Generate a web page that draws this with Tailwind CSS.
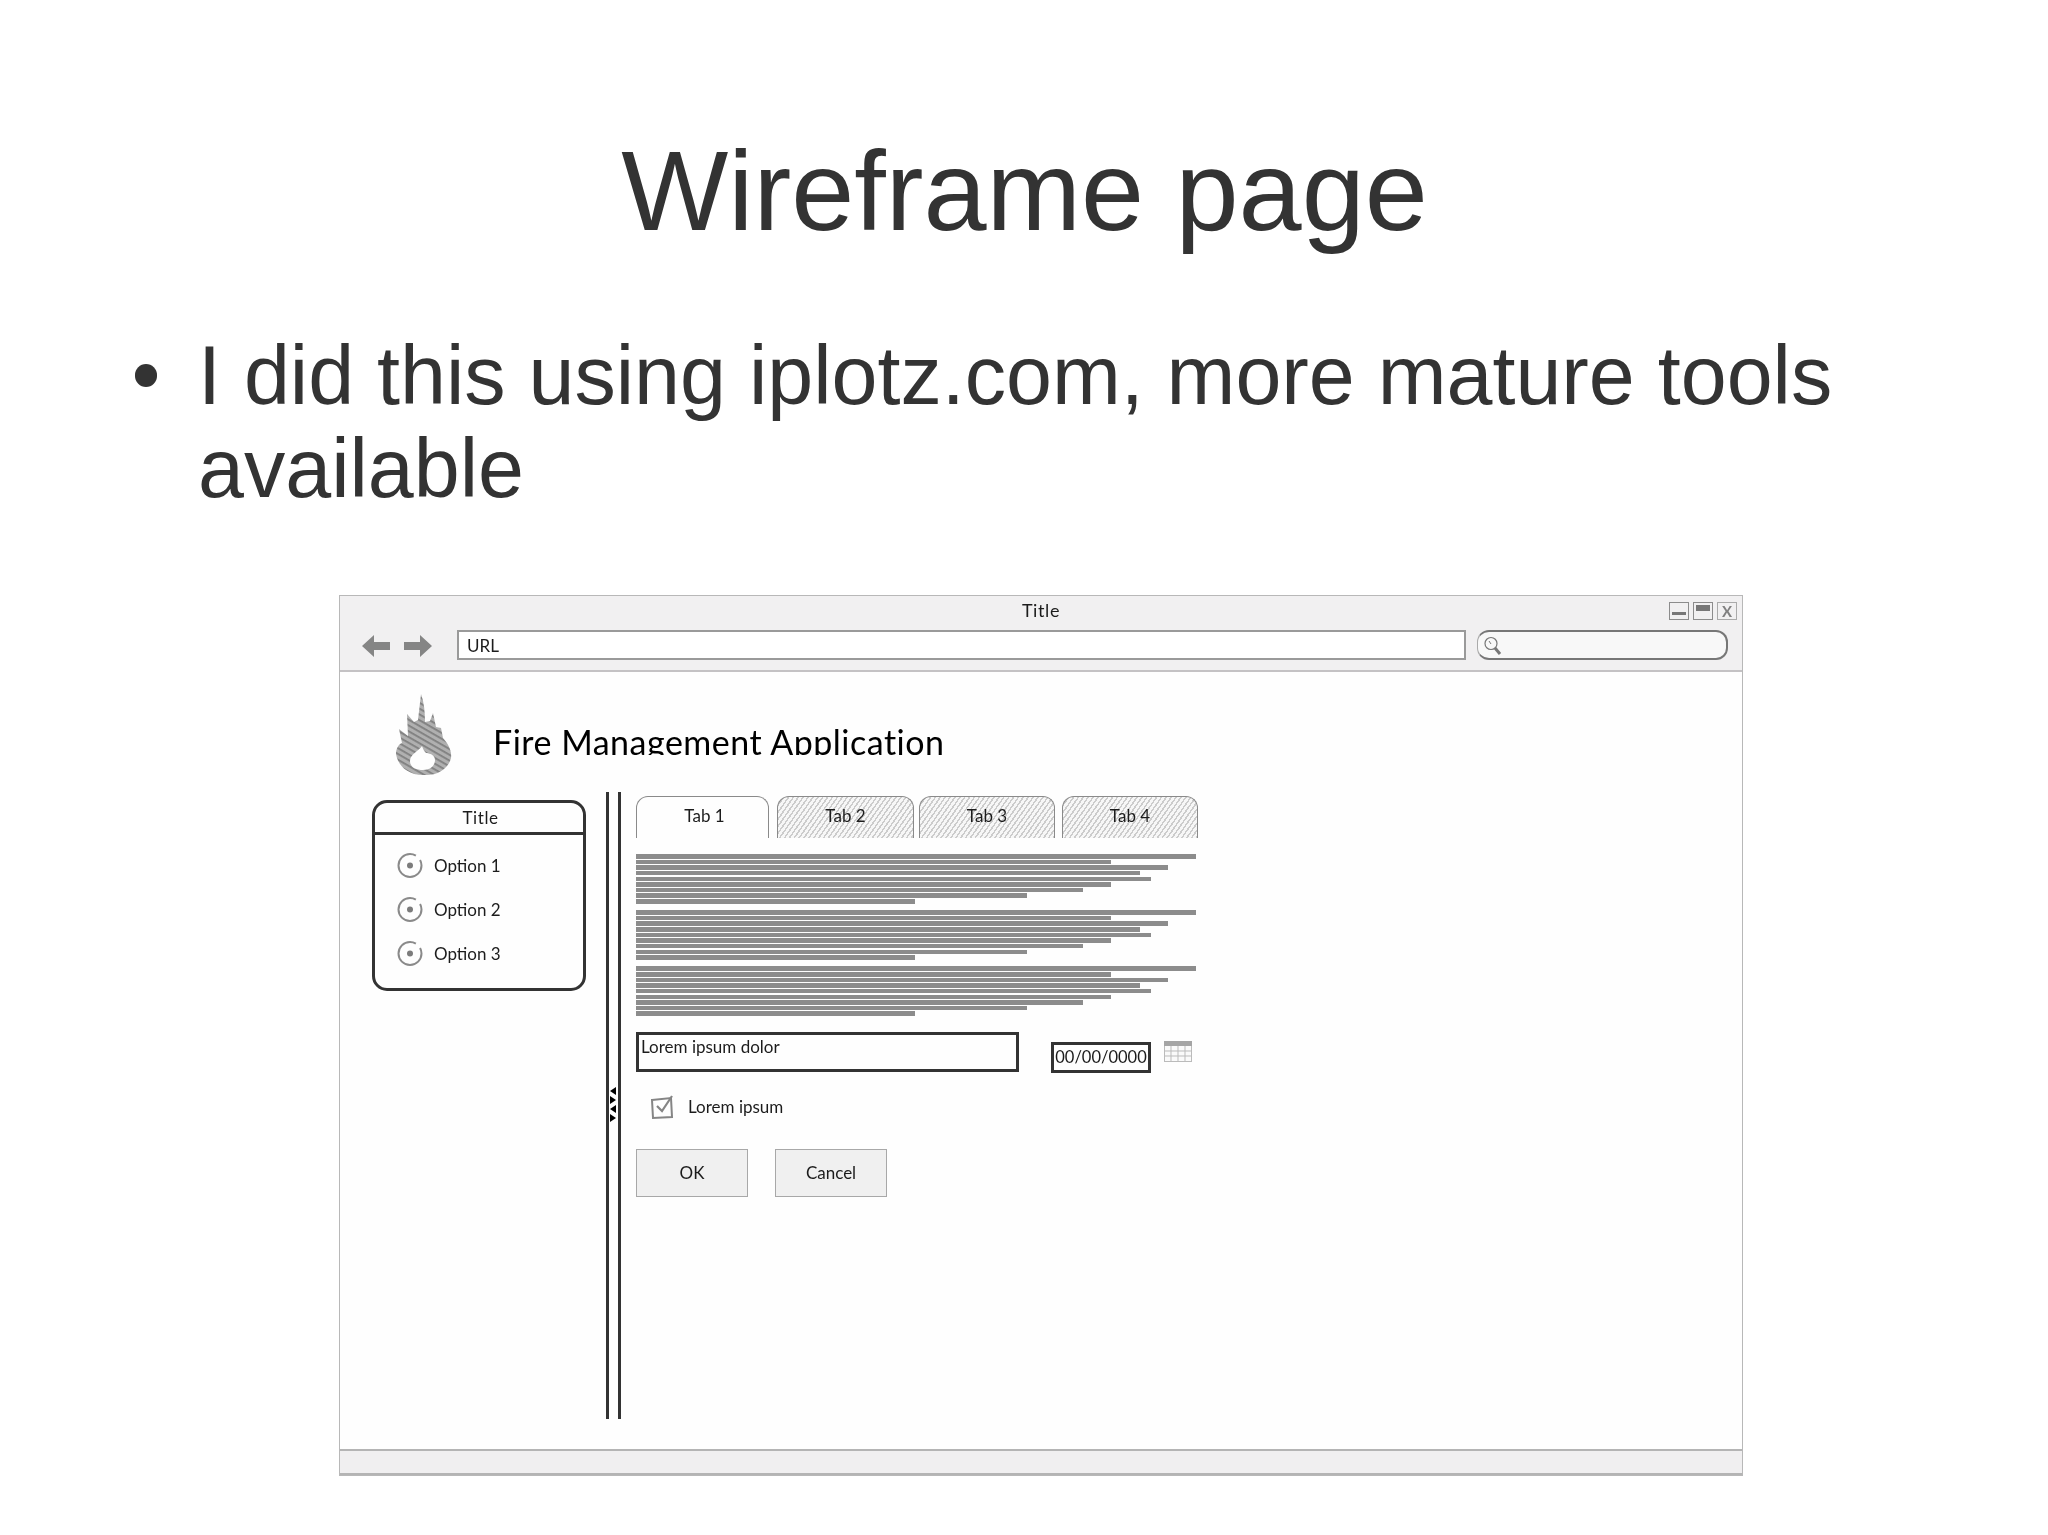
<!DOCTYPE html>
<html lang="en">
<head>
    <meta charset="UTF-8">
    <title>Wireframe page</title>
    <script src="https://cdn.jsdelivr.net/npm/@tailwindcss/browser@4"></script>
</head>
<body class="bg-white min-h-screen text-[#333333] font-['Liberation_Sans',Arial,sans-serif]">
    <div class="w-[2048px] h-[1535px] overflow-hidden">
        <!-- slide heading -->
        <h1 class="pt-[127px] h-[254px] text-center text-[113.4px] leading-[127px] pl-[1px]">Wireframe page</h1>

        <!-- bullet -->
        <div class="flex pl-[135px] mt-[78px] h-[188px]">
            <span class="w-[22px] h-[23px] rounded-full bg-[#333333] mt-[32px] shrink-0"></span>
            <p class="ml-[41px] -mt-[3px] w-[1700px] text-[82.6px] leading-[93px]">I did this using iplotz.com, more mature tools available</p>
        </div>

        <!-- wireframe window -->
        <div class="ml-[339px] mt-[75px] w-[1404px] h-[881px] flex flex-col border border-[#b8b8b8] bg-[#fefefe] font-['Lato',sans-serif] text-[#1c1c1c] blur-[0.5px]">
            <div class="h-[76px] bg-[#f1f0f1] border-b-2 border-[#c4c2c4] shrink-0 flex flex-col">
                <div class="h-[34px] relative flex justify-center pt-[3px]">
                    <span class="text-[18px] leading-[23px] tracking-[0.6px]">Title</span>
                    <div class="absolute right-[5px] top-[6px] flex gap-[4px]">
                        <div class="w-[20px] h-[18px] border border-[#8c8c8c] flex items-end justify-center pb-[4px]"><div class="w-[14px] h-[3px] bg-[#777777]"></div></div>
                        <div class="w-[20px] h-[18px] border border-[#8c8c8c] flex justify-center pt-[2px]"><div class="w-[14px] h-[6px] bg-[#777777]"></div></div>
                        <div class="w-[20px] h-[18px] border border-[#aaaaaa] text-[15px] leading-[16px] text-center font-bold text-[#808080]">X</div>
                    </div>
                </div>
                <div class="flex items-center pl-[22px] h-[30px]">
                    <svg class="w-[28px] h-[22px] mt-[2px]" viewBox="0 0 28 22"><path d="M0 11 L12 0 V7 H28 V15 H12 V22Z" fill="#858585"/></svg>
                    <svg class="w-[28px] h-[22px] ml-[14px] mt-[2px]" viewBox="0 0 28 22"><path d="M28 11 L16 0 V7 H0 V15 H16 V22Z" fill="#858585"/></svg>
                    <div class="ml-[25px] w-[1009px] h-[30px] bg-white border-2 border-[#9a9a9a] pl-[8px] text-[17px] leading-[28px]">URL</div>
                    <div class="ml-[11px] w-[251px] h-[30px] rounded-[12px] border-2 border-[#777777] border-l border-l-[#aaaaaa] relative bg-[#f8f8f8]">
                        <svg class="absolute left-[5px] top-[4px] w-[20px] h-[20px]" viewBox="0 0 20 20" fill="none" stroke="#777777"><circle cx="8" cy="7.5" r="6" stroke-width="1.2"/><path d="M12 12 L17 18" stroke-width="3"/><path d="M6 5 L8 8" stroke-width="1"/></svg>
                    </div>
                </div>
            </div>

            <div class="flex-1 flex flex-col relative">
                <!-- app header -->
                <div class="flex h-[119px] pl-[56px] shrink-0">
                    <svg class="w-[56px] h-[82px] mt-[22px]" viewBox="0 0 56 82">
                        <defs><pattern id="fireHatch" width="5" height="5" patternUnits="userSpaceOnUse" patternTransform="rotate(30)"><rect width="5" height="5" fill="#b0b0b0"/><rect width="5" height="1.8" fill="#808080"/></pattern></defs>
                        <path fill-rule="evenodd" fill="url(#fireHatch)" d="M25 0 C28 8 29 18 29 28 L34 27 L37 19 L40 33 L45 34 L47 44 C52 50 56 56 55 64 C52 76 40 82 27 81 C12 81 2 72 0 60 C0 54 3 50 6 49 L3 35 L12 42 L11 20 L18 28 L22 26 Z M26 52 C24 56 14 60 14 67 C14 74 21 76 27 76 C34 76 39 72 39 66 C39 60 32 59 30 59 C28 57 27 55 26 52 Z"/>
                    </svg>
                    <div class="ml-[41px] mt-[47px] h-[36px] overflow-hidden text-[34px] leading-[46px] tracking-[0.5px] text-black whitespace-nowrap">Fire Management Application</div>
                </div>

                <div class="flex">
                    <!-- left panel -->
                    <div class="ml-[32px] mt-[9px] w-[214px] h-[191px] rounded-[15px] border-[3px] border-[#333333] shrink-0">
                        <div class="h-[32px] border-b-[3px] border-[#333333] text-center text-[17px] leading-[28px] pt-[1px] pl-[3px] tracking-[0.6px]">Title</div>
                        <div class="flex flex-col pl-[22px] pt-[17px] gap-[17px]">
                            <div class="flex items-center h-[27px]">
                                <svg class="w-[26px] h-[27px]" viewBox="0 0 26 27" fill="none"><circle cx="13" cy="13.5" r="11.5" stroke="#8a8a8a" stroke-width="2" stroke-dasharray="60 6"/><circle cx="13" cy="13.5" r="3" fill="#7c7c7c"/></svg>
                                <span class="ml-[11px] text-[17px]">Option 1</span>
                            </div>
                            <div class="flex items-center h-[27px]">
                                <svg class="w-[26px] h-[27px]" viewBox="0 0 26 27" fill="none"><circle cx="13" cy="13.5" r="11.5" stroke="#8a8a8a" stroke-width="2" stroke-dasharray="60 6"/><circle cx="13" cy="13.5" r="3" fill="#7c7c7c"/></svg>
                                <span class="ml-[11px] text-[17px]">Option 2</span>
                            </div>
                            <div class="flex items-center h-[27px]">
                                <svg class="w-[26px] h-[27px]" viewBox="0 0 26 27" fill="none"><circle cx="13" cy="13.5" r="11.5" stroke="#8a8a8a" stroke-width="2" stroke-dasharray="60 6"/><circle cx="13" cy="13.5" r="3" fill="#7c7c7c"/></svg>
                                <span class="ml-[11px] text-[17px]">Option 3</span>
                            </div>
                        </div>
                    </div>

                    <!-- splitter -->
                    <div class="ml-[20px] mt-[1px] w-[15px] h-[627px] border-x-[3px] border-[#333333] relative shrink-0">
                        <div class="absolute left-[1px] top-[295px] flex flex-col gap-[1px]">
                            <div class="w-0 h-0 border-y-[4px] border-y-transparent border-r-[6px] border-r-black"></div>
                            <div class="w-0 h-0 border-y-[4px] border-y-transparent border-l-[6px] border-l-black"></div>
                            <div class="w-0 h-0 border-y-[4px] border-y-transparent border-r-[6px] border-r-black"></div>
                            <div class="w-0 h-0 border-y-[4px] border-y-transparent border-l-[6px] border-l-black"></div>
                        </div>
                    </div>

                    <!-- tabbed content -->
                    <div class="ml-[15px] w-[562px] shrink-0 pt-[5px]">
                        <div class="flex h-[42px] text-[17px]">
                            <div class="w-[133px] rounded-t-[12px] border border-b-0 border-[#8a8a8a] text-center leading-[38px] pl-[4px]">Tab 1</div>
                            <div class="ml-[8px] w-[137px] rounded-t-[12px] border border-b-0 border-[#8a8a8a] text-center leading-[38px] bg-[repeating-linear-gradient(125deg,#cccccc_0,#cccccc_1.5px,#f7f7f7_1.5px,#f7f7f7_4px)]">Tab 2</div>
                            <div class="ml-[5px] w-[136px] rounded-t-[12px] border border-b-0 border-[#8a8a8a] text-center leading-[38px] bg-[repeating-linear-gradient(125deg,#cccccc_0,#cccccc_1.5px,#f7f7f7_1.5px,#f7f7f7_4px)]">Tab 3</div>
                            <div class="ml-[7px] w-[136px] rounded-t-[12px] border border-b-0 border-[#8a8a8a] text-center leading-[38px] bg-[repeating-linear-gradient(125deg,#cccccc_0,#cccccc_1.5px,#f7f7f7_1.5px,#f7f7f7_4px)]">Tab 4</div>
                        </div>

                        <div class="mt-[16px] flex flex-col gap-[6.7px]">
                            <div class="flex flex-col gap-[1.13px]">
                                <div class="h-[4.5px] w-[560px] bg-[#8c8c8c]"></div>
                                <div class="h-[4.5px] w-[475px] bg-[#8c8c8c]"></div>
                                <div class="h-[4.5px] w-[532px] bg-[#8c8c8c]"></div>
                                <div class="h-[4.5px] w-[504px] bg-[#8c8c8c]"></div>
                                <div class="h-[4.5px] w-[515px] bg-[#8c8c8c]"></div>
                                <div class="h-[4.5px] w-[475px] bg-[#8c8c8c]"></div>
                                <div class="h-[4.5px] w-[447px] bg-[#8c8c8c]"></div>
                                <div class="h-[4.5px] w-[391px] bg-[#8c8c8c]"></div>
                                <div class="h-[4.5px] w-[279px] bg-[#8c8c8c]"></div>
                            </div>
                            <div class="flex flex-col gap-[1.13px]">
                                <div class="h-[4.5px] w-[560px] bg-[#8c8c8c]"></div>
                                <div class="h-[4.5px] w-[475px] bg-[#8c8c8c]"></div>
                                <div class="h-[4.5px] w-[532px] bg-[#8c8c8c]"></div>
                                <div class="h-[4.5px] w-[504px] bg-[#8c8c8c]"></div>
                                <div class="h-[4.5px] w-[515px] bg-[#8c8c8c]"></div>
                                <div class="h-[4.5px] w-[475px] bg-[#8c8c8c]"></div>
                                <div class="h-[4.5px] w-[447px] bg-[#8c8c8c]"></div>
                                <div class="h-[4.5px] w-[391px] bg-[#8c8c8c]"></div>
                                <div class="h-[4.5px] w-[279px] bg-[#8c8c8c]"></div>
                            </div>
                            <div class="flex flex-col gap-[1.13px]">
                                <div class="h-[4.5px] w-[560px] bg-[#8c8c8c]"></div>
                                <div class="h-[4.5px] w-[475px] bg-[#8c8c8c]"></div>
                                <div class="h-[4.5px] w-[532px] bg-[#8c8c8c]"></div>
                                <div class="h-[4.5px] w-[504px] bg-[#8c8c8c]"></div>
                                <div class="h-[4.5px] w-[515px] bg-[#8c8c8c]"></div>
                                <div class="h-[4.5px] w-[475px] bg-[#8c8c8c]"></div>
                                <div class="h-[4.5px] w-[447px] bg-[#8c8c8c]"></div>
                                <div class="h-[4.5px] w-[391px] bg-[#8c8c8c]"></div>
                                <div class="h-[4.5px] w-[279px] bg-[#8c8c8c]"></div>
                            </div>
                        </div>

                        <!-- form fields -->
                        <div class="flex mt-[16px] items-start">
                            <div class="w-[383px] h-[40px] border-[3px] border-[#333333] pl-[2px] text-[17px] leading-[24px]">Lorem ipsum dolor</div>
                            <div class="ml-[32px] mt-[10px] w-[100px] h-[31px] border-[3px] border-[#333333] text-center text-[16.5px] leading-[24px] whitespace-nowrap">00/00/0000</div>
                            <svg class="ml-[13px] mt-[9px] w-[28px] h-[21px]" viewBox="0 0 28 21" fill="none" stroke="#bbbbbb"><rect x="0.5" y="0.5" width="27" height="20" fill="#fafafa"/><rect x="0" y="0" width="28" height="5" fill="#a5a5a5" stroke="none"/><path d="M0 10H28M0 15H28M7 5V21M14 5V21M21 5V21"/></svg>
                        </div>
                        <div class="flex items-center mt-[21px] ml-[13px] h-[26px]">
                            <svg class="w-[26px] h-[26px]" viewBox="0 0 26 26" fill="none" stroke="#858585" stroke-width="2"><path d="M3 6 L22 4 L23 23 L4 24 Z"/><path d="M8 12 L13 17 L23 2" stroke-width="2.2"/></svg>
                            <span class="ml-[13px] text-[17px]">Lorem ipsum</span>
                        </div>
                        <div class="flex mt-[29px] gap-[27px]">
                            <div class="w-[112px] h-[48px] bg-[#f0f0f0] border border-[#a8a8a8] text-center text-[17px] leading-[46px]">OK</div>
                            <div class="w-[112px] h-[48px] bg-[#f0f0f0] border border-[#a8a8a8] text-center text-[17px] leading-[46px]">Cancel</div>
                        </div>
                    </div>
                </div>

                <!-- status bar -->
                <div class="absolute left-0 right-0 bottom-0 h-[26px] bg-[#f0eff0] border-y-2 border-[#b4b4b4]"></div>
            </div>
        </div>
    </div>
</body>
</html>
